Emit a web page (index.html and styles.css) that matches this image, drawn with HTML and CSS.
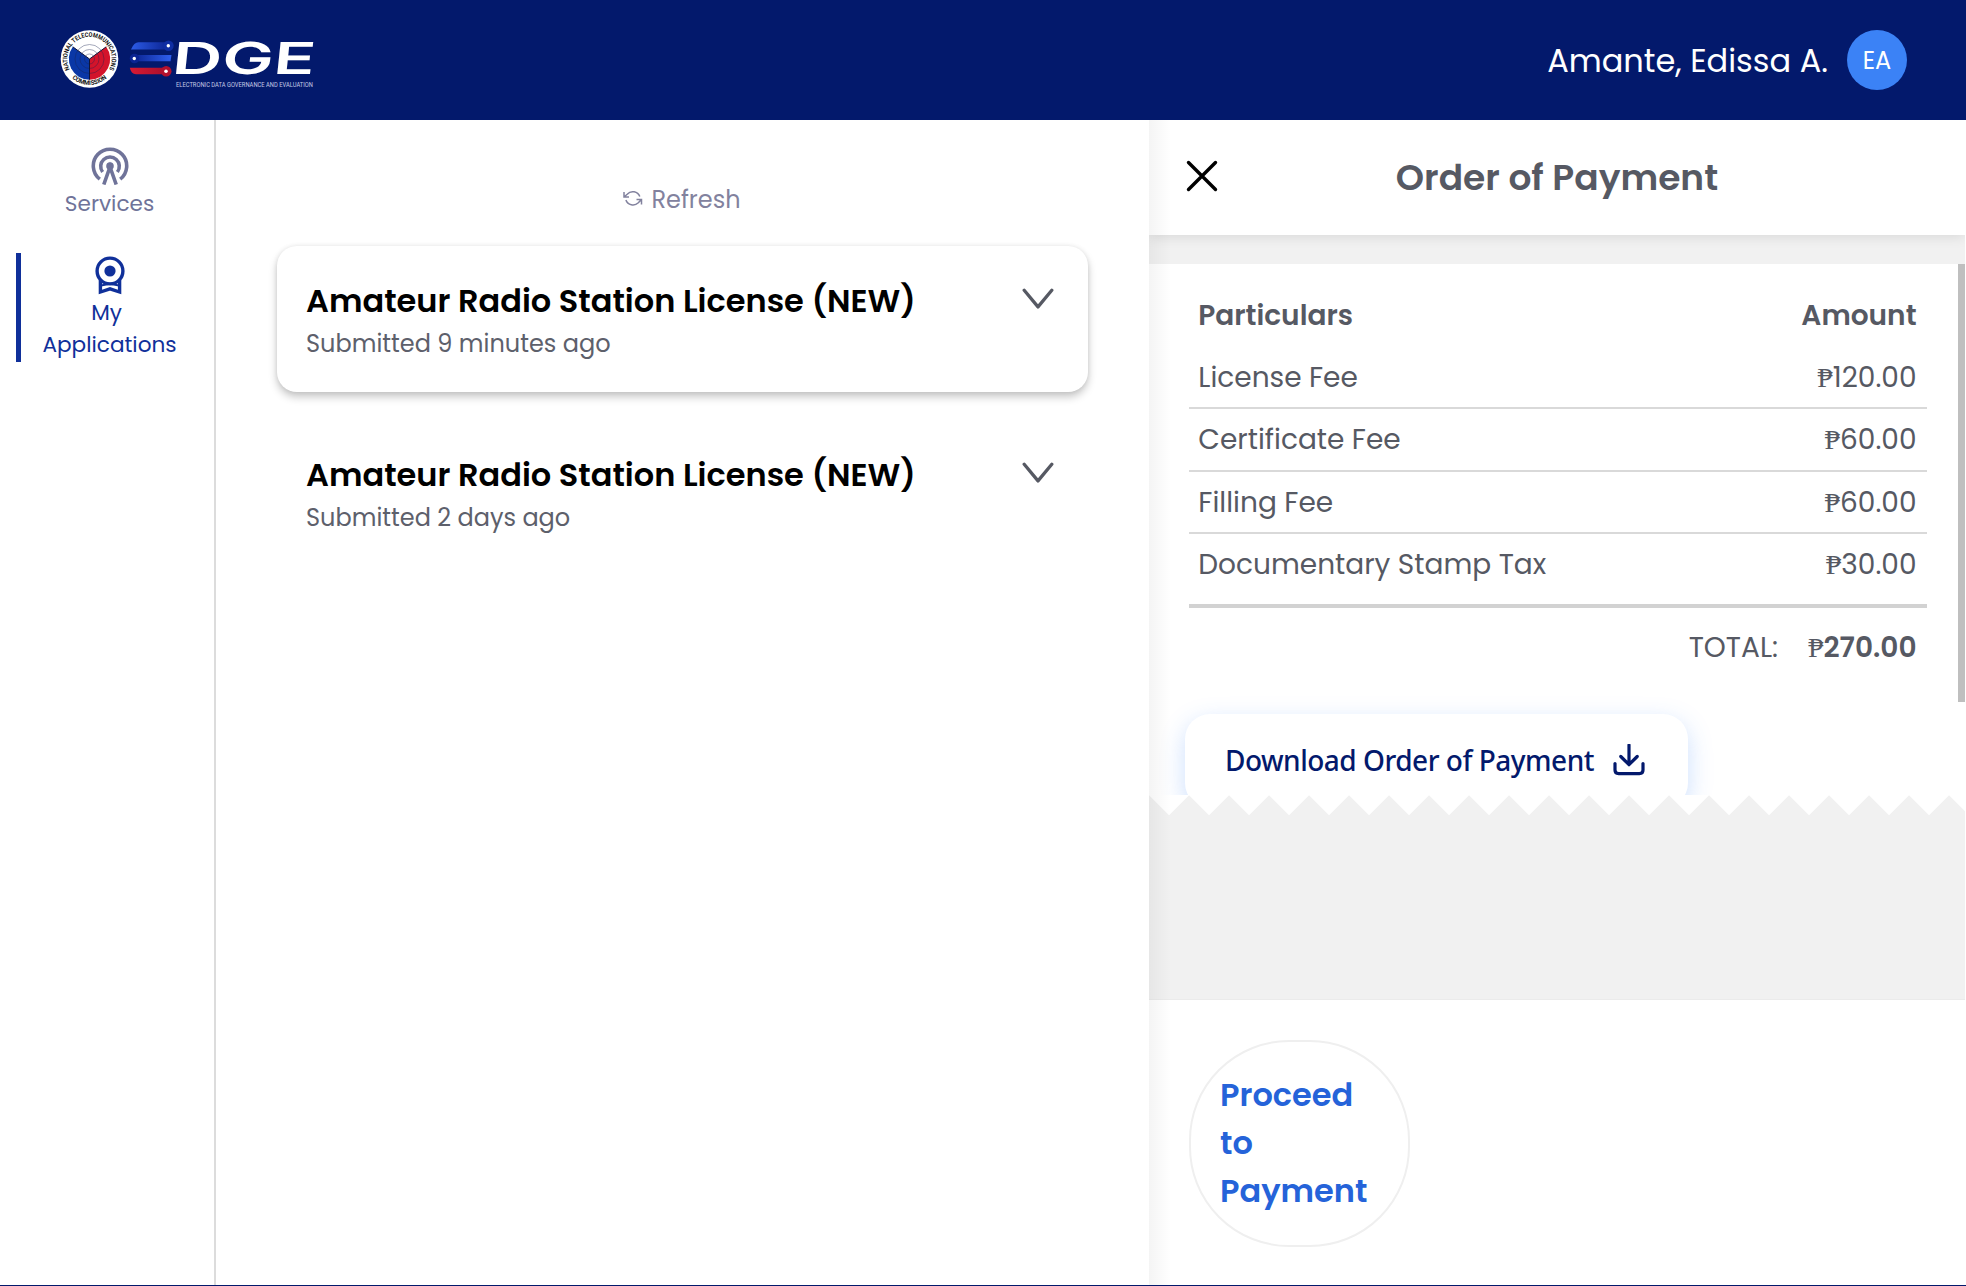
FILE: index.html
```html
<!DOCTYPE html>
<html lang="en">
<head>
<meta charset="utf-8">
<title>EDGE - My Applications</title>
<link rel="stylesheet" href="styles.css">
</head>
<body>
<div class="app">
  <header class="topbar">
    <svg class="logo" width="260" height="66" viewBox="58 26 260 66">
      <defs>
        <linearGradient id="barTop" x1="0" x2="1"><stop offset="0" stop-color="#2c5be6"/><stop offset="1" stop-color="#0b2492"/></linearGradient>
        <linearGradient id="barMid" x1="0" x2="1"><stop offset="0" stop-color="#0b2492"/><stop offset="1" stop-color="#2f5fee"/></linearGradient>
        <linearGradient id="barLow" x1="0" x2="1"><stop offset="0" stop-color="#d81a33"/><stop offset="1" stop-color="#a60f2c"/></linearGradient>
        <path id="arcTop" d="M69.9 69.5A22.2 22.2 0 1 1 109.1 69.5"/>
        <path id="arcLow" d="M67 72A26.1 26.1 0 0 0 112 72"/>
      </defs>
      <circle cx="89.5" cy="59" r="28.8" fill="#fff"/>
      <path d="M89.5 59V79.7A20.7 20.7 0 0 1 72.8 46.8Z" fill="#0a37a6"/>
      <path d="M89.5 59V79.7A20.7 20.7 0 0 0 106.2 46.8Z" fill="#d3142b"/>
      <g fill="none" stroke="#1a2350" stroke-width=".6" opacity=".65">
        <circle cx="89.5" cy="59" r="5"/><circle cx="89.5" cy="59" r="9.5"/><circle cx="89.5" cy="59" r="14.5"/>
      </g>
      <path d="M72.8 46.8L89.5 59L106.2 46.8M89.5 59V79.7" fill="none" stroke="#10163a" stroke-width="1"/>
      <text class="seal-text"><textPath href="#arcTop" textLength="91" lengthAdjust="spacingAndGlyphs">NATIONAL TELECOMMUNICATIONS</textPath></text>
      <text class="seal-text"><textPath href="#arcLow" startOffset="8" textLength="38" lengthAdjust="spacingAndGlyphs">COMMISSION</textPath></text>
      <path d="M131 49.5Q134 42.3 138.5 42.3H168V49.5Z" fill="url(#barTop)"/>
      <circle cx="168.5" cy="45.7" r="5.2" fill="#0f2ea3"/><circle cx="168.3" cy="45.7" r="1.7" fill="#fff"/>
      <path d="M134 55H171.5L170.5 61.2H134Z" fill="url(#barMid)"/>
      <circle cx="134.5" cy="58.5" r="4.8" fill="#0b2492"/><circle cx="134.3" cy="58.5" r="1.7" fill="#fff"/>
      <path d="M129.8 67.8H168V74.2H136Q131 74 129.8 67.8Z" fill="url(#barLow)"/>
      <circle cx="166.2" cy="71.2" r="5.3" fill="#b3112d"/><circle cx="166" cy="71.2" r="1.8" fill="#fff"/>
      <text class="wordmark" transform="translate(171 74.2) skewX(-6)" textLength="143" lengthAdjust="spacingAndGlyphs">DGE</text>
      <text class="tagline" x="176" y="86.5" textLength="137" lengthAdjust="spacingAndGlyphs">ELECTRONIC DATA GOVERNANCE AND EVALUATION</text>
    </svg>
    <div class="user">
      <span class="user-name">Amante, Edissa A.</span>
      <span class="avatar">EA</span>
    </div>
  </header>

  <div class="body">
    <nav class="sidebar">
      <a class="nav-item">
        <svg width="38" height="38" viewBox="0 0 38 38" fill="none" stroke="currentColor" stroke-width="3.6">
          <path d="M8.8 32.1A16.7 16.7 0 1 1 29.2 32.1"/>
          <path d="M11.6 25A9.3 9.3 0 1 1 26.4 25"/>
          <circle cx="19" cy="19" r="3.8" fill="currentColor" stroke="none"/>
          <path d="M12.8 37.5L19 20L25.2 37.5"/>
        </svg>
        <span>Services</span>
      </a>
      <a class="nav-item active">
        <svg width="30" height="39" viewBox="0 0 30 39" fill="none" stroke="currentColor" stroke-width="3.4">
          <circle cx="15" cy="15" r="12.9"/>
          <circle cx="15" cy="15" r="5.6" fill="currentColor" stroke="none"/>
          <path d="M5.4 24V36L15 32.8L24.6 36V24"/>
          <path d="M6 29.5L15 27.8L24 29.5" stroke-width="2"/>
        </svg>
        <span class="my">My</span>
        <span>Applications</span>
      </a>
    </nav>

    <main class="content">
      <button class="refresh">
        <svg width="20" height="18" viewBox="0 0 20 18" fill="none" stroke="currentColor" stroke-width="1.5">
          <path d="M1 2V7H6M1.3 6.8L4.200 4.200A7.500 7.500 0 0 1 16.800 6.600"/>
          <path d="M18.500 14.500V9.500H13.500M18.200 9.700L15.300 12.800A7.500 7.500 0 0 1 2.900 10"/>
        </svg>
        <span>Refresh</span>
      </button>
      <article class="card raised">
        <div>
          <h3>Amateur Radio Station License (NEW)</h3>
          <p>Submitted 9 minutes ago</p>
        </div>
        <svg class="chevron" width="32" height="22" viewBox="0 0 32 22"><path d="M2.2 2.2L16 18.9L29.8 2.2"/></svg>
      </article>
      <article class="card">
        <div>
          <h3>Amateur Radio Station License (NEW)</h3>
          <p>Submitted 2 days ago</p>
        </div>
        <svg class="chevron" width="32" height="22" viewBox="0 0 32 22"><path d="M2.2 2.2L16 18.9L29.8 2.2"/></svg>
      </article>
    </main>

    <aside class="panel">
      <div class="panel-head">
        <svg class="close" width="32" height="32" viewBox="0 0 32 32"><path d="M2.5 2.5L29.5 29.5M29.5 2.5L2.5 29.5"/></svg>
        <h2>Order of Payment</h2>
      </div>
      <div class="receipt">
        <div class="row head"><span>Particulars</span><span>Amount</span></div>
        <div class="row"><span>License Fee</span><span>₱120.00</span></div>
        <div class="row"><span>Certificate Fee</span><span>₱60.00</span></div>
        <div class="row"><span>Filling Fee</span><span>₱60.00</span></div>
        <div class="row last"><span>Documentary Stamp Tax</span><span>₱30.00</span></div>
        <div class="row total"><span>TOTAL:</span><span>₱<b>270.00</b></span></div>
        <button class="download">
          <span>Download Order of Payment</span>
          <svg width="32" height="32" viewBox="0 0 32 32"><path d="M16 1V20M7.8 12.5L16 20.7L24.2 12.5M2 19.5V26Q2 29.6 5.6 29.6H26.4Q30 29.6 30 26V19.5"/></svg>
        </button>
        <div class="scrollbar"></div>
      </div>
      <div class="zigzag"></div>
      <footer class="panel-foot">
        <button class="proceed">Proceed<br>to<br>Payment</button>
      </footer>
    </aside>
  </div>
</div>
</body>
</html>
```
FILE: styles.css
```css
* { box-sizing: border-box; margin: 0; padding: 0; }

body {
  font-family: Poppins, "Liberation Serif", Inter, sans-serif;
  background: #fff;
  overflow: hidden;
}

button { font: inherit; border: 0; background: none; }
svg { display: block; flex: none; }

.app {
  display: flex;
  flex-direction: column;
  height: 1286px;
  border-bottom: 1px solid #03196c;
}

.topbar {
  display: flex;
  align-items: center;
  justify-content: space-between;
  height: 120px;
  padding: 0 59px 0 58px;
  background: #03196c;
  color: #fff;
}

.logo { margin-bottom: 2px; overflow: visible; }
.seal-text { font: 700 6.4px Roboto, sans-serif; fill: #111; }
.wordmark { font: 600 44px Inter, sans-serif; fill: #fff; }
.tagline { font: 400 7px Roboto, sans-serif; fill: #c3cae6; }

.user { display: flex; align-items: center; gap: 19px; }
.user-name { padding-top: 2px; font-size: 32px; line-height: 48px; }
.avatar {
  width: 60px;
  height: 60px;
  border-radius: 50%;
  background: #3b82f6;
  font-size: 24px;
  line-height: 61px;
  text-align: center;
}

.body { display: flex; flex: 1; min-height: 0; }

.sidebar {
  width: 216px;
  padding-top: 27px;
  border-right: 2px solid #dcdcdc;
}
.nav-item {
  display: flex;
  flex-direction: column;
  align-items: center;
  padding-left: 5px;
  font-size: 21.6px;
  line-height: 32px;
  color: #6f7399;
}
.nav-item svg { margin-bottom: 3px; }
.nav-item.active {
  height: 109px;
  margin: 33px 0 0 16px;
  padding: 3px 16px 0 0;
  border-left: 5px solid #10309a;
  color: #10309a;
}
.nav-item.active svg { margin-bottom: 2px; }
.nav-item.active .my { margin-right: 6px; }

.content {
  display: flex;
  flex-direction: column;
  width: 933px;
  padding: 62px 61px 0;
}
.refresh {
  display: flex;
  align-items: center;
  align-self: center;
  gap: 8px;
  margin: 0 1px 28px 0;
  font-size: 24px;
  line-height: 36px;
  color: #82829e;
}
.refresh svg { margin-bottom: 2px; }
.card {
  display: flex;
  justify-content: space-between;
  height: 146px;
  margin-bottom: 28px;
  padding: 31px 34px 0 29px;
  border-radius: 20px;
}
.card.raised {
  box-shadow: 0 5px 8px rgba(0, 0, 0, .22), 0 0 5px rgba(0, 0, 0, .08);
}
.card h3 { font-size: 32px; font-weight: 600; line-height: 48px; color: #000; }
.card p { padding-top: 1px; font-size: 24px; line-height: 36px; color: #5d606b; }
.chevron {
  margin-top: 11px;
  fill: none;
  stroke: #565963;
  stroke-width: 3.3;
  stroke-linecap: round;
  stroke-linejoin: round;
}

.panel {
  position: relative;
  display: flex;
  flex-direction: column;
  width: 816px;
  background: #f1f1f1;
  color: #565963;
}
.panel::after {
  content: "";
  position: absolute;
  inset: 0 auto 0 0;
  width: 22px;
  background: linear-gradient(90deg, rgba(0, 0, 0, .045), transparent);
}
.panel > * { flex-shrink: 0; }
.panel-head {
  display: flex;
  align-items: center;
  height: 115px;
  padding-left: 37px;
  background: #fff;
  box-shadow: 0 2px 12px rgba(0, 0, 0, .1);
  clip-path: inset(0 0 -20px 0);
}
.panel-head h2 {
  flex: 1;
  padding: 1px 69px 0 0;
  text-align: center;
  font-size: 36px;
  font-weight: 600;
  line-height: 54px;
}
.close {
  margin-bottom: 3px;
  fill: none;
  stroke: #000;
  stroke-width: 3.4;
  stroke-linecap: round;
}

.receipt {
  position: relative;
  height: 531px;
  margin-top: 29px;
  padding: 21px 38px 0 40px;
  background: #fff;
  overflow: hidden;
  font-size: 28px;
}
.row {
  display: flex;
  justify-content: space-between;
  height: 62.2px;
  padding: 0 10.5px 0 9.3px;
  border-bottom: 2px solid #d9d9d9;
  line-height: 62.2px;
}
.row.head { border: 0; font-weight: 600; }
.row.last { height: 74px; border-bottom: 4px solid #d2d2d2; }
.row.total {
  justify-content: flex-end;
  gap: 30px;
  height: 106.2px;
  border: 0;
  line-height: 79px;
}
.row b { font-weight: 600; }

.download {
  display: flex;
  gap: 19px;
  width: 503px;
  height: 94px;
  margin-left: -4px;
  padding: 28px 0 0 40px;
  border-radius: 25px;
  background: #fff;
  box-shadow: 0 8px 24px rgba(59, 130, 246, .26);
  color: #03196c;
  font: 500 28px/36px "Noto Sans", sans-serif;
  letter-spacing: -.5px;
}
.download svg {
  margin-top: 2px;
  fill: none;
  stroke: #03196c;
  stroke-width: 3.2;
  stroke-linecap: round;
  stroke-linejoin: round;
}
.scrollbar {
  position: absolute;
  top: 0;
  right: 0;
  width: 7px;
  height: 438px;
  background: #bfbfbf;
}

/* torn receipt edge */
.zigzag {
  height: 204px;
  background:
    linear-gradient(135deg, #fff 14px, transparent 14.6px) 20px 0 / 40px 21px repeat-x,
    linear-gradient(225deg, #fff 14px, transparent 14.6px) 20px 0 / 40px 21px repeat-x;
}

.panel-foot {
  flex: 1;
  padding: 40px 40px 0;
  border-top: 1px solid #ebebeb;
  background: #fff;
}
.proceed {
  width: 221px;
  height: 207px;
  padding: 0 0 2px 29px;
  border: 2px solid #efefef;
  border-radius: 100px;
  color: #2563d9;
  font-size: 32px;
  font-weight: 600;
  line-height: 48px;
  text-align: left;
}
```
